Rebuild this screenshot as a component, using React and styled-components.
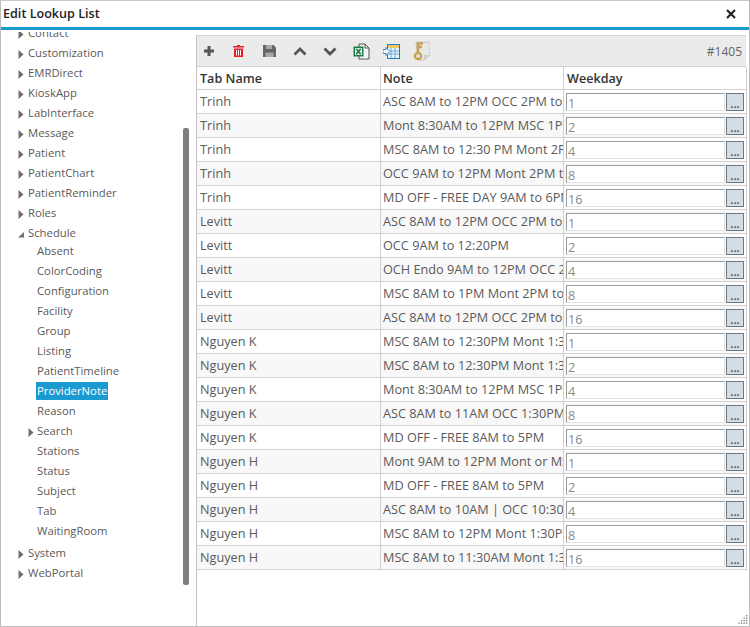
import React from 'react';
import styled, { createGlobalStyle } from 'styled-components';

const Global = createGlobalStyle`
  html, body { margin: 0; padding: 0; background: #fff; }
  * { box-sizing: border-box; }
`;

const Win = styled.div`
  width: 750px; height: 627px; border: 1px solid #bdbdbd; border-top-color: #c8c8c8; background: #fff;
  display: flex; flex-direction: column; overflow: hidden; position: relative;
  font-family: "Open Sans", "Noto Sans", sans-serif; font-size: 11.3px; color: #5a5a5a;
`;
const TitleBar = styled.div`
  height: 29px; flex: none; border-bottom: 3px solid #1b9ad2; display: flex; align-items: center;
  justify-content: space-between; padding: 0 13px 1px 2px; font-weight: 600; font-size: 12.6px; color: #222;
`;
const Body = styled.div`
  flex: 1; min-height: 0; display: flex;
`;
const Side = styled.div`
  width: 195px; flex: none; position: relative; overflow: hidden; margin-top: 2px;
`;
const Tree = styled.div`
  margin-top: -9px; padding-left: 17px;
`;
const Node = styled.div`
  height: 20px; display: flex; align-items: center; padding-left: ${p => p.$child ? 19 : 0}px;
  margin-top: ${p => p.$gap ? 2 : 0}px; margin-bottom: ${p => p.$after ? -2 : 0}px; white-space: nowrap;
`;
const Arrow = styled.svg`
  width: 6px; height: 9px; flex: none; margin-right: 4px; margin-top: 2px; fill: #707070;
`;
const ChildArrow = styled(Arrow)`
  margin-left: -9px; margin-right: 3px;
`;
const Label = styled.span`
  margin-left: -1px; padding: 0 1px; line-height: 18px; height: 18px; display: block;
  ${p => p.$sel && 'background:#1b9ad2;color:#fff;'}
`;
const Thumb = styled.div`
  position: absolute; left: 182px; top: 96px; width: 6px; height: 457px; background: #7f7f7f; border-radius: 2px;
`;
const Main = styled.div`
  flex: 1; min-width: 0; margin-top: 5px; border-left: 1px solid #c4c4c4; position: relative;
`;
const Toolbar = styled.div`
  height: 32px; width: 549px; background: #ebebeb; border-top: 1px solid #d4d4d4; border-bottom: 1px solid #d0d0d0;
  display: flex; align-items: center; padding-left: 6px; padding-right: 4px; font-size: 12px;
`;
const Btn = styled.div`
  width: 30px; flex: none; display: flex; align-items: center;
`;
const Id = styled.div`
  margin-left: auto; color: #666;
`;
const Table = styled.div`
  display: grid; grid-template-columns: 184px 183px 183px; width: 550px; font-size: 12.7px;
`;
const Head = styled.div`
  height: 23px; border-right: 1px solid #d0d0d0; border-bottom: 1px solid #d0d0d0; padding-left: ${p => p.$pad}px;
  font-weight: 600; font-size: 12.6px; color: #333; display: flex; align-items: center;
`;
const Cell = styled.div`
  height: 24px; border-right: 1px solid #d0d0d0; border-bottom: 1px solid #d0d0d0;
  padding: 0 0 2px ${p => p.$pad}px;
  display: flex; align-items: center; white-space: nowrap; overflow: hidden;
  background: ${p => p.$alt ? '#f8f8f8' : '#fff'};
`;
const WeekCell = styled(Cell)`
  padding: 0 1px 0 2px; gap: 1px;
`;
const Input = styled.div`
  width: 159px; height: 18px; flex: none; border: 1px solid #999; border-bottom-color: #e4e4e4; border-right-color: #e0e0e0;
  background: #fff; color: #8a8a8a; padding-left: 1px; font-size: 12.7px; line-height: 19px;
`;
const Dots = styled.div`
  width: 18px; height: 18px; flex: none; background: #d3dde5; border: 1px solid #6f7880;
  color: #555; font-size: 11px; font-weight: 700; line-height: 20px; text-align: center;
`;
const Grip = styled.svg`
  position: absolute; right: 1px; bottom: 1px; width: 12px; height: 12px; fill: #777;
`;

const top = ['Customization','EMRDirect','KioskApp','LabInterface','Message','Patient','PatientChart','PatientReminder','Roles'];
const kids = ['Absent','ColorCoding','Configuration','Facility','Group','Listing','PatientTimeline','ProviderNote','Reason','Search','Stations','Status','Subject','Tab','WaitingRoom'];
const rows = [
  ['Trinh','ASC 8AM to 12PM OCC 2PM to 5PM','1'],
  ['Trinh','Mont 8:30AM to 12PM MSC 1PM to 5PM','2'],
  ['Trinh','MSC 8AM to 12:30 PM Mont 2PM to 5PM','4'],
  ['Trinh','OCC 9AM to 12PM Mont 2PM to 5PM','8'],
  ['Trinh','MD OFF - FREE DAY 9AM to 6PM','16'],
  ['Levitt','ASC 8AM to 12PM OCC 2PM to 5PM','1'],
  ['Levitt','OCC 9AM to 12:20PM','2'],
  ['Levitt','OCH Endo 9AM to 12PM OCC 2PM to 5PM','4'],
  ['Levitt','MSC 8AM to 1PM Mont 2PM to 5PM','8'],
  ['Levitt','ASC 8AM to 12PM OCC 2PM to 5PM','16'],
  ['Nguyen K','MSC 8AM to 12:30PM Mont 1:30PM','1'],
  ['Nguyen K','MSC 8AM to 12:30PM Mont 1:30PM','2'],
  ['Nguyen K','Mont 8:30AM to 12PM MSC 1PM to 5PM','4'],
  ['Nguyen K','ASC 8AM to 11AM OCC 1:30PM to 5PM','8'],
  ['Nguyen K','MD OFF - FREE 8AM to 5PM','16'],
  ['Nguyen H','Mont 9AM to 12PM Mont or MSC','1'],
  ['Nguyen H','MD OFF - FREE 8AM to 5PM','2'],
  ['Nguyen H','ASC 8AM to 10AM | OCC 10:30AM','4'],
  ['Nguyen H','MSC 8AM to 12PM Mont 1:30PM to 5PM','8'],
  ['Nguyen H','MSC 8AM to 11:30AM Mont 1:30PM','16'],
];

const Closed = () => <Arrow viewBox="0 0 6 9"><path d="M0.5 0 L5.5 4.5 L0.5 9 Z" /></Arrow>;

export default function App() {
  return (
    <Win>
      <Global />
      <TitleBar>
        <span>Edit Lookup List</span>
        <svg width="10" height="10" viewBox="0 0 10 10"><path d="M1 1 L9 9 M9 1 L1 9" stroke="#222" strokeWidth="2.2" fill="none" /></svg>
      </TitleBar>
      <Body>
        <Side>
          <Tree>
            <Node><Closed /><Label>Contact</Label></Node>
            {top.map(t => <Node key={t}><Closed /><Label>{t}</Label></Node>)}
            <Node $after><Arrow viewBox="0 0 6 9"><path d="M0 7.5 L6 2 L6 7.5 Z" /></Arrow><Label>Schedule</Label></Node>
            {kids.map(k => (
              <Node key={k} $child>
                {k === 'Search' && <ChildArrow viewBox="0 0 6 9"><path d="M0.5 0 L5.5 4.5 L0.5 9 Z" /></ChildArrow>}
                <Label $sel={k === 'ProviderNote'}>{k}</Label>
              </Node>
            ))}
            <Node $gap><Closed /><Label>System</Label></Node>
            <Node><Closed /><Label>WebPortal</Label></Node>
          </Tree>
          <Thumb />
        </Side>
        <Main>
          <Toolbar>
            <Btn><svg width="12" height="12" viewBox="0 0 12 12"><path d="M6 1 V11 M1 6 H11" stroke="#555" strokeWidth="3" /></svg></Btn>
            <Btn><svg width="11" height="12" viewBox="0 0 11 12"><path fill="#ee1c25" d="M4 0 H7 V1 H11 V2.5 H0 V1 H4 Z M1 3.5 H10 V12 H1 Z" /><path stroke="#fff" strokeWidth="1" d="M3.5 5 V10.5 M5.5 5 V10.5 M7.5 5 V10.5" /></svg></Btn>
            <Btn><svg width="13" height="12" viewBox="0 0 13 12"><path fill="#666" d="M0 0 H10.5 L13 2.5 V12 H0 Z" /><path fill="#ddd" d="M3 0 H9 V4 H3 Z M2.5 7.5 H10.5 V12 H2.5 Z" opacity=".55" /></svg></Btn>
            <Btn><svg width="14" height="9" viewBox="0 0 14 9"><path d="M1.5 7.5 L7 2 L12.5 7.5" fill="none" stroke="#555" strokeWidth="2.8" /></svg></Btn>
            <Btn><svg width="14" height="9" viewBox="0 0 14 9"><path d="M1.5 1.5 L7 7 L12.5 1.5" fill="none" stroke="#555" strokeWidth="2.8" /></svg></Btn>
            <Btn><svg width="17" height="17" viewBox="0 0 17 17"><path d="M6 1 H12 L16 5 V16 H6 Z" fill="#f5f5f5" stroke="#555" /><path d="M12 1 V5 H16" fill="none" stroke="#555" /><rect x="0.5" y="3.5" width="10" height="10" fill="#1f7a45" /><rect x="2" y="5" width="7" height="7" fill="#e8f3ec" /><path d="M3.3 5.8 L7.7 11.2 M7.7 5.8 L3.3 11.2" stroke="#1f7a45" strokeWidth="1.6" /></svg></Btn>
            <Btn><svg width="17" height="15" viewBox="0 0 17 15"><rect x="4.5" y="0.5" width="12" height="14" fill="#eef6fc" stroke="#1b7fc0" /><path fill="#f2c96a" d="M5 1 H16 V4 H5 Z" /><path d="M8 4 V14 M12 4 V14 M5 7 H16 M5 10 H16" stroke="#6aa8d8" /><path d="M0 5.5 H3 V3.5 L7 7.5 L3 11.5 V9.5 H0 Z" fill="#fff" stroke="#1b7fc0" strokeWidth=".9" /></svg></Btn>
            <Btn><svg width="17" height="20" viewBox="0 0 17 20"><path d="M3 1 H15 Q17 1 17 3 V14 L11 19 H5 Z" fill="#e8e8e4" stroke="#c4c4c0" /><path d="M17 14 H11 V19 Z" fill="#cfcfca" /><circle cx="5" cy="15" r="3.2" fill="none" stroke="#c8a24e" strokeWidth="2.2" /><path d="M5 11.5 V2.5 H10 M5 6 H9" fill="none" stroke="#c8a24e" strokeWidth="2.4" /></svg></Btn>
            <Id>#1405</Id>
          </Toolbar>
          <Table>
            <Head $pad={3}>Tab Name</Head><Head $pad={2}>Note</Head><Head $pad={3}>Weekday</Head>
            {rows.map((r, i) => (
              <React.Fragment key={i}>
                <Cell $pad={3} $alt={i % 2 === 1}>{r[0]}</Cell>
                <Cell $pad={2} $alt={i % 2 === 1}>{r[1]}</Cell>
                <WeekCell $alt={i % 2 === 1}><Input>{r[2]}</Input><Dots>...</Dots></WeekCell>
              </React.Fragment>
            ))}
          </Table>
          <Grip viewBox="0 0 12 12">
            {[[10,2],[10,4.5],[7.5,4.5],[10,7],[7.5,7],[5,7],[10,9.5],[7.5,9.5],[5,9.5],[2.5,9.5]].map(([x,y],i)=><rect key={i} x={x} y={y} width="1.3" height="1.3" />)}
          </Grip>
        </Main>
      </Body>
    </Win>
  );
}
